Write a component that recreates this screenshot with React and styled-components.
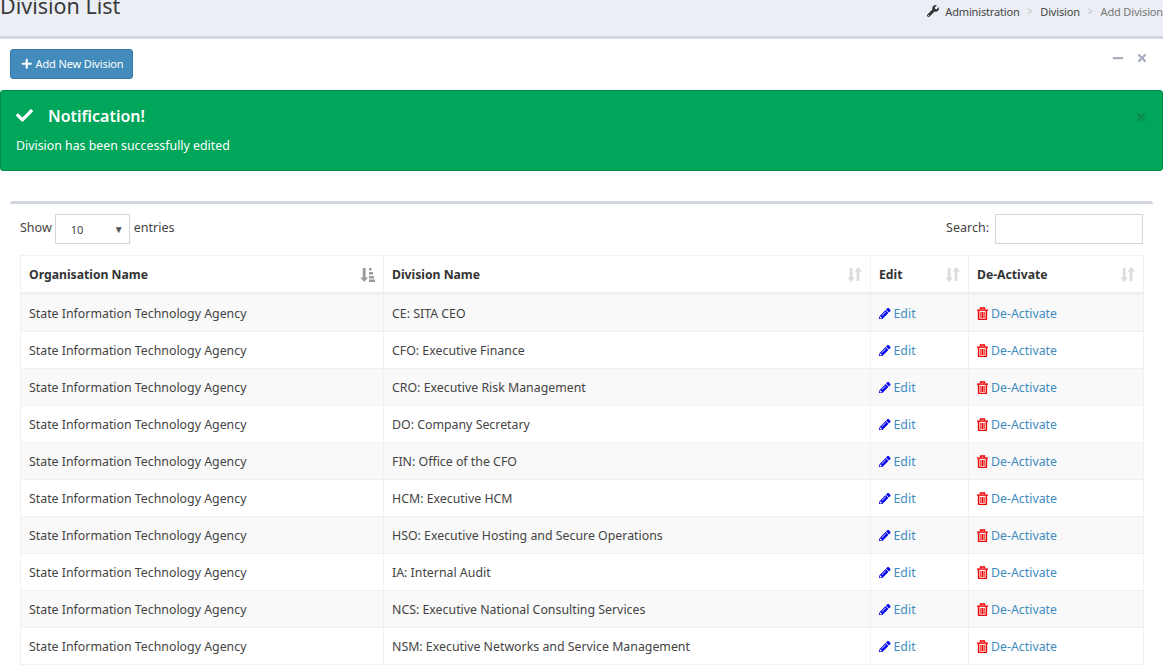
import React from "react";
import styled, { createGlobalStyle } from "styled-components";
import { FaWrench, FaPlus, FaCheck, FaMinus, FaTimes, FaPencilAlt } from "react-icons/fa";

const FONT = `"Noto Sans", "Open Sans", sans-serif`;

const GlobalStyle = createGlobalStyle`
  html, body {
    margin: 0;
    height: 100%;
    overflow: hidden;
    background: #fff;
  }
  body {
    font-family: ${FONT};
    font-size: 13px;
    color: #333;
  }
`;

const Page = styled.div`
  width: 1163px;
  height: 665px;
  overflow: hidden;
`;

const Header = styled.header`
  height: 36px;
  background: #ebeef4;
  border-bottom: 3px solid #d2d6e0;
  display: flex;
  justify-content: space-between;
  align-items: flex-start;
  overflow: hidden;
`;

const Title = styled.h1`
  margin: -9px 0 0;
  font-size: 21.5px;
  font-weight: 400;
  line-height: 30px;
  color: #3a3a3a;
`;

const Crumbs = styled.div`
  display: flex;
  align-items: center;
  height: 22px;
  font-size: 11px;
  letter-spacing: -0.15px;
  color: #444;
  white-space: nowrap;
  svg {
    margin-right: 6px;
    font-size: 12px;
    color: #333;
  }
`;

const Crumb = styled.span`
  color: ${({ $muted }) => ($muted ? "#777" : "#444")};
`;

const Sep = styled.span`
  color: #c4c4c4;
  margin: 0 7.5px;
  font-size: 10px;
`;

const Panel = styled.section`
  position: relative;
  padding: 10px 0 0;
`;

const AddButton = styled.button`
  display: flex;
  align-items: center;
  gap: 3px;
  margin-left: 10px;
  width: 123px;
  height: 30px;
  padding: 0 0 1px 10px;
  background: #428bba;
  border: 1px solid #3a7ca8;
  border-radius: 3px;
  color: #fff;
  font-family: ${FONT};
  font-size: 11px;
  letter-spacing: -0.13px;
  white-space: nowrap;
  svg {
    font-size: 11.5px;
  }
`;

const PanelTools = styled.div`
  position: absolute;
  top: 13px;
  right: 15px;
  display: flex;
  gap: 12px;
  color: #a9afc0;
  font-size: 12px;
`;

const Alert = styled.div`
  position: relative;
  margin-top: 11px;
  height: 79px;
  background: #00a65a;
  border: 1px solid #008d4c;
  border-radius: 3px;
  color: #fff;
  padding: 0 15px;
`;

const AlertTitle = styled.h4`
  display: flex;
  align-items: center;
  margin: 0;
  padding-top: 12px;
  height: 25px;
  font-size: 16px;
  font-weight: 600;
  line-height: 24px;
  svg {
    font-size: 17px;
    margin-right: 15px;
  }
`;

const AlertText = styled.p`
  margin: 8px 0 0;
  font-size: 12.35px;
  line-height: 20px;
`;

const AlertClose = styled.span`
  position: absolute;
  top: 19px;
  right: 15px;
  font-size: 12px;
  color: #0a8a50;
`;

const Card = styled.section`
  margin: 30px 10px 0;
  border-top: 3px solid #d2d6e0;
  border-radius: 3px;
  padding: 10px 10px 0;
`;

const Controls = styled.div`
  display: flex;
  justify-content: space-between;
  align-items: flex-start;
  height: 41px;
`;

const Label = styled.label`
  display: flex;
  align-items: flex-start;
  font-size: 12.5px;
  line-height: 27px;
  color: #444;
`;

const FakeSelect = styled.div`
  display: flex;
  align-items: center;
  justify-content: space-between;
  box-sizing: border-box;
  width: 75px;
  height: 30px;
  margin: 0 4px 0 3px;
  padding: 1px 5px 0 15px;
  border: 1px solid #d2d6e0;
  font-size: 11px;
  color: #444;
  i {
    font-style: normal;
    font-size: 10px;
    color: #555;
  }
`;

const SearchInput = styled.input`
  box-sizing: border-box;
  width: 148px;
  height: 30px;
  margin-left: 6px;
  border: 1px solid #d2d6e0;
  outline: none;
`;

const Table = styled.table`
  width: 1123px;
  border-collapse: collapse;
  table-layout: fixed;
  font-size: 12.35px;
`;

const Th = styled.th`
  height: 36px;
  padding: 0 8px;
  text-align: left;
  font-size: 12.2px;
  font-weight: 700;
  color: #333;
  border: 1px solid #f1f1f1;
  border-bottom: 3px solid #f1f1f1;
  position: relative;
`;

const SortMark = styled.svg`
  position: absolute;
  top: 11px;
  right: 8px;
  color: ${({ $active }) => ($active ? "#9a9a9a" : "#dcdcdc")};
`;

const Row = styled.tr`
  background: ${({ $odd }) => ($odd ? "#f9f9f9" : "#fff")};
`;

const Td = styled.td`
  height: 36px;
  padding: 0 8px;
  color: #444;
  border: 1px solid #f1f1f1;
  white-space: nowrap;
`;

const ActionLink = styled.a`
  display: inline-flex;
  align-items: center;
  gap: 3px;
  vertical-align: middle;
  color: #3f8cc0;
  svg {
    flex: none;
  }
`;

const EditIcon = styled(FaPencilAlt)`
  color: #0000ee;
  font-size: 11.5px;
`;

const rows = [
  "CE: SITA CEO",
  "CFO: Executive Finance",
  "CRO: Executive Risk Management",
  "DO: Company Secretary",
  "FIN: Office of the CFO",
  "HCM: Executive HCM",
  "HSO: Executive Hosting and Secure Operations",
  "IA: Internal Audit",
  "NCS: Executive National Consulting Services",
  "NSM: Executive Networks and Service Management",
];

const TrashIcon = () => (
  <svg width="11" height="13" viewBox="0 0 11 13" fill="none">
    <path d="M3.5 2.5V1h4v1.5" stroke="#f00000" strokeWidth="1.4" />
    <path d="M0 2.4h11v1.4H0z" fill="#f00000" />
    <path d="M1.6 3.5v8.2c0 .5.3.8.8.8h6.2c.5 0 .8-.3.8-.8V3.5" stroke="#f00000" strokeWidth="1.5" />
    <path d="M3.9 5v6M5.5 5v6M7.1 5v6" stroke="#f00000" strokeWidth="1.1" />
  </svg>
);

const SortIcon = () => (
  <SortMark width="15" height="15" viewBox="0 0 15 15" fill="currentColor">
    <path d="M2.8 1h2.8v9.5H8L4.2 15 .5 10.5h2.3z" />
    <path d="M9.6 14h2.8V4.5H15L11.2 0 7.5 4.5h2.1z" />
  </SortMark>
);

const SortActiveIcon = () => (
  <SortMark $active width="15" height="15" viewBox="0 0 15 15" fill="currentColor">
    <path d="M2.8 1h2.8v9.5H8L4.2 15 .5 10.5h2.3z" />
    <path d="M9 1h2.5v2.6H9zM9 5h4v2.6H9zM9 9h5v2.6H9zM9 12.6h6V15H9z" />
  </SortMark>
);

const App = () => {
  return (
    <Page>
      <GlobalStyle />
      <Header>
        <Title>Division List</Title>
        <Crumbs>
          <FaWrench />
          <Crumb>Administration</Crumb>
          <Sep>&gt;</Sep>
          <Crumb>Division</Crumb>
          <Sep>&gt;</Sep>
          <Crumb $muted>Add Division</Crumb>
        </Crumbs>
      </Header>
      <Panel>
        <AddButton>
          <FaPlus />
          Add New Division
        </AddButton>
        <PanelTools>
          <FaMinus />
          <FaTimes />
        </PanelTools>
        <Alert>
          <AlertTitle>
            <FaCheck />
            Notification!
          </AlertTitle>
          <AlertText>Division has been successfully edited</AlertText>
          <AlertClose>
            <FaTimes />
          </AlertClose>
        </Alert>
      </Panel>
      <Card>
        <Controls>
          <Label>
            Show
            <FakeSelect>
              10
              <i>▼</i>
            </FakeSelect>
            entries
          </Label>
          <Label>
            Search:
            <SearchInput />
          </Label>
        </Controls>
        <Table>
          <colgroup>
            <col width="363" />
            <col width="487" />
            <col width="98" />
            <col width="175" />
          </colgroup>
          <thead>
            <tr>
              <Th>
                Organisation Name
                <SortActiveIcon />
              </Th>
              <Th>
                Division Name
                <SortIcon />
              </Th>
              <Th>
                Edit
                <SortIcon />
              </Th>
              <Th>
                De-Activate
                <SortIcon />
              </Th>
            </tr>
          </thead>
          <tbody>
            {rows.map((name, i) => (
              <Row key={name} $odd={i % 2 === 0}>
                <Td>State Information Technology Agency</Td>
                <Td>{name}</Td>
                <Td>
                  <ActionLink>
                    <EditIcon />
                    Edit
                  </ActionLink>
                </Td>
                <Td>
                  <ActionLink>
                    <TrashIcon />
                    De-Activate
                  </ActionLink>
                </Td>
              </Row>
            ))}
          </tbody>
        </Table>
      </Card>
    </Page>
  );
};

export default App;
